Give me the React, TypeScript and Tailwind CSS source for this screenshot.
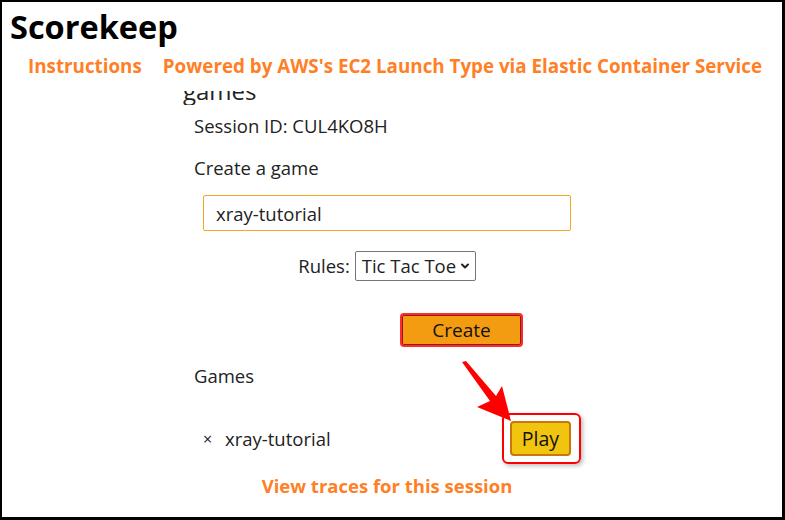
import { ChevronDown } from 'lucide-react';

const FONT = "font-['Open_Sans',sans-serif]";

function Arrow() {
  return (
    <svg
      className="absolute left-0 top-0 pointer-events-none"
      width="785"
      height="520"
      viewBox="0 0 785 520"
    >
      <polygon
        points="460,360 464,359 494,394 500,384 509,419 475,405 488,399"
        fill="#ff0000"
      />
    </svg>
  );
}

export default function App() {
  return (
    <div
      className={`relative w-[785px] h-[520px] overflow-hidden bg-white text-[#222] border-t-2 border-l-2 border-r-[3px] border-b-[3px] border-black ${FONT}`}
    >
      {/* Header */}
      <h1 className="pl-[8px] h-[50px] text-[32.5px] leading-[50px] font-bold text-black">
        Scorekeep
      </h1>
      <nav className="mt-[2px] h-[24px] flex text-[18.8px] leading-[24px] font-bold text-[#ff7f27]">
        <span className="ml-[26px]">Instructions</span>
        <span className="ml-[21px]">Powered by AWS's EC2 Launch Type via Elastic Container Service</span>
      </nav>

      {/* Page body, scrolled under the nav */}
      <div className="ml-[192px] w-[386px] text-[18.5px]">
        <div className="mt-[13px] h-[14px] overflow-hidden -ml-[11px]">
          <div className="text-[24px] leading-[0px]">games</div>
        </div>

        <div className="mt-[9px] leading-[24px]">Session ID: CUL4KO8H</div>
        <div className="mt-[18px] leading-[24px]">Create a game</div>

        <input
          readOnly
          value="xray-tutorial"
          className="block mt-[15px] mx-auto w-[368px] h-[36px] px-[12px] text-[18.5px] border border-[#f5a623] rounded-[2px] outline-none"
        />

        <div className="mt-[20px] h-[30px] flex items-center justify-center gap-[5px]">
          <span>Rules:</span>
          <div className="relative">
            <select className="appearance-none w-[121px] h-[30px] pl-[6px] text-[18.5px] border border-[#767676] rounded-[2px] bg-white">
              <option>Tic Tac Toe</option>
            </select>
            <ChevronDown
              className="absolute right-[5px] top-[9px] w-[12px] h-[12px] pointer-events-none"
              strokeWidth={4}
            />
          </div>
        </div>

        <button className="block mt-[32px] ml-[206px] w-[123px] h-[34px] text-[19px] text-[#111] bg-[#f39c12] border-2 border-[#ff2a2a] shadow-[inset_0_0_0_1px_#8b1a1a] rounded-[4px]">
          Create
        </button>

        <div className="mt-[17px] leading-[24px]">Games</div>

        <div className="mt-[33px] h-[35px] flex items-center leading-[24px]">
          <span className="ml-[9px] w-[22px] text-[16px]">×</span>
          <span className="w-[285px]">xray-tutorial</span>
          <div className="relative">
            <span className="absolute -left-[8px] -top-[8px] -right-[10px] -bottom-[8px] border-2 border-[#ff0000] rounded-[6px] shadow-[2px_2px_4px_rgba(0,0,0,0.25)]" />
            <button className="relative w-[61px] h-[35px] text-[19.5px] text-[#111] bg-[#f1c40f] border-2 border-[#c8780a] rounded-[4px]">
              Play
            </button>
          </div>
        </div>

        <div className="mt-[18px] text-center leading-[24px] font-bold text-[#ff7f27]">
          View traces for this session
        </div>
      </div>

      <Arrow />
    </div>
  );
}
